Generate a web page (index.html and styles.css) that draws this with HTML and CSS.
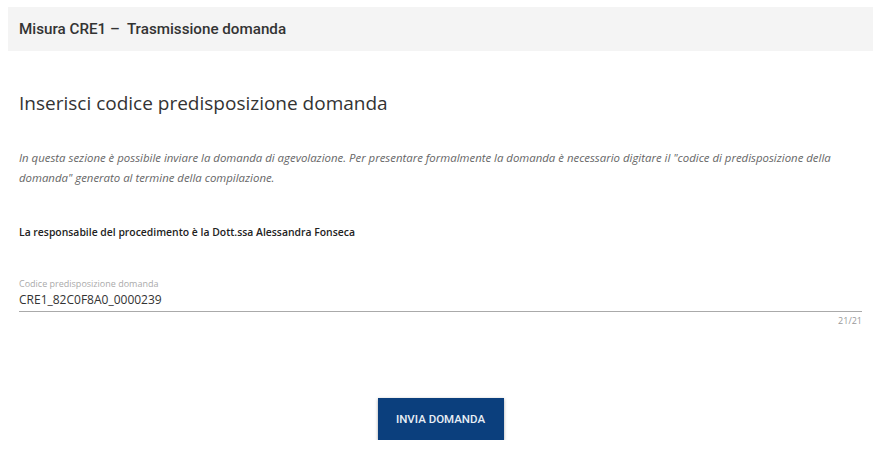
FILE: index.html
```html
<!DOCTYPE html>
<html lang="it">
<head>
<meta charset="utf-8">
<title>Trasmissione domanda</title>
<link rel="stylesheet" href="styles.css">
</head>
<body>
<div class="page">
  <header class="topbar">Misura CRE1 &ndash;&nbsp; Trasmissione domanda</header>
  <main class="content">
    <h1 class="title">Inserisci codice predisposizione domanda</h1>
    <p class="intro">In questa sezione è possibile inviare la domanda di agevolazione. Per presentare formalmente la domanda è necessario digitare il "codice di predisposizione della domanda" generato al termine della compilazione.</p>
    <p class="resp">La responsabile del procedimento è la Dott.ssa Alessandra Fonseca</p>
    <div class="field">
      <label class="field-label">Codice predisposizione domanda</label>
      <div class="field-value">CRE1_82C0F8A0_0000239</div>
      <div class="field-count">21/21</div>
    </div>
    <div class="actions">
      <button class="btn">INVIA DOMANDA</button>
    </div>
  </main>
</div>
</body>
</html>
```

FILE: styles.css
```css
html, body { margin: 0; padding: 0; background: #fff; }
.page { padding: 7px 8px 0 8px; }
.topbar {
  background: #f4f4f4;
  height: 44px;
  line-height: 44px;
  padding-left: 11px;
  font-family: Roboto, "Liberation Sans", sans-serif;
  font-weight: 500;
  font-size: 15.2px;
  color: #333;
}
.content { padding: 0 11px; }
.title {
  margin: 37px 0 0 0;
  font-family: "Open Sans", sans-serif;
  font-weight: 400;
  font-size: 19px;
  line-height: 30px;
  color: #333;
}
.intro {
  margin: 30px 0 0 0;
  font-family: "Open Sans", sans-serif;
  font-style: italic;
  font-size: 11.4px;
  line-height: 20px;
  color: #666;
}
.resp {
  margin: 34px 0 0 0;
  font-family: "Open Sans", sans-serif;
  font-weight: 600;
  font-size: 10.4px;
  line-height: 20px;
  color: #222;
}
.field { margin-top: 36px; }
.field-label {
  display: block;
  font-family: "Open Sans", sans-serif;
  font-size: 9px;
  line-height: 12px;
  color: #aaa;
}
.field-value {
  font-family: "Open Sans", sans-serif;
  font-size: 12px;
  line-height: 20px;
  color: #333;
  border-bottom: 1px solid #aaa;
  padding-bottom: 1px;
}
.field-count {
  text-align: right;
  font-family: "Open Sans", sans-serif;
  font-size: 9px;
  line-height: 18px;
  color: #999;
}
.actions { display: flex; justify-content: center; margin-top: 68px; }
.btn {
  width: 126px;
  height: 42px;
  border: none;
  background: #0b3f7d;
  color: #e8eef5;
  font-family: Roboto, "Liberation Sans", sans-serif;
  font-weight: 500;
  font-size: 11.5px;
  box-shadow: 0 1px 3px rgba(0,0,0,0.35);
  padding: 0;
}
```
